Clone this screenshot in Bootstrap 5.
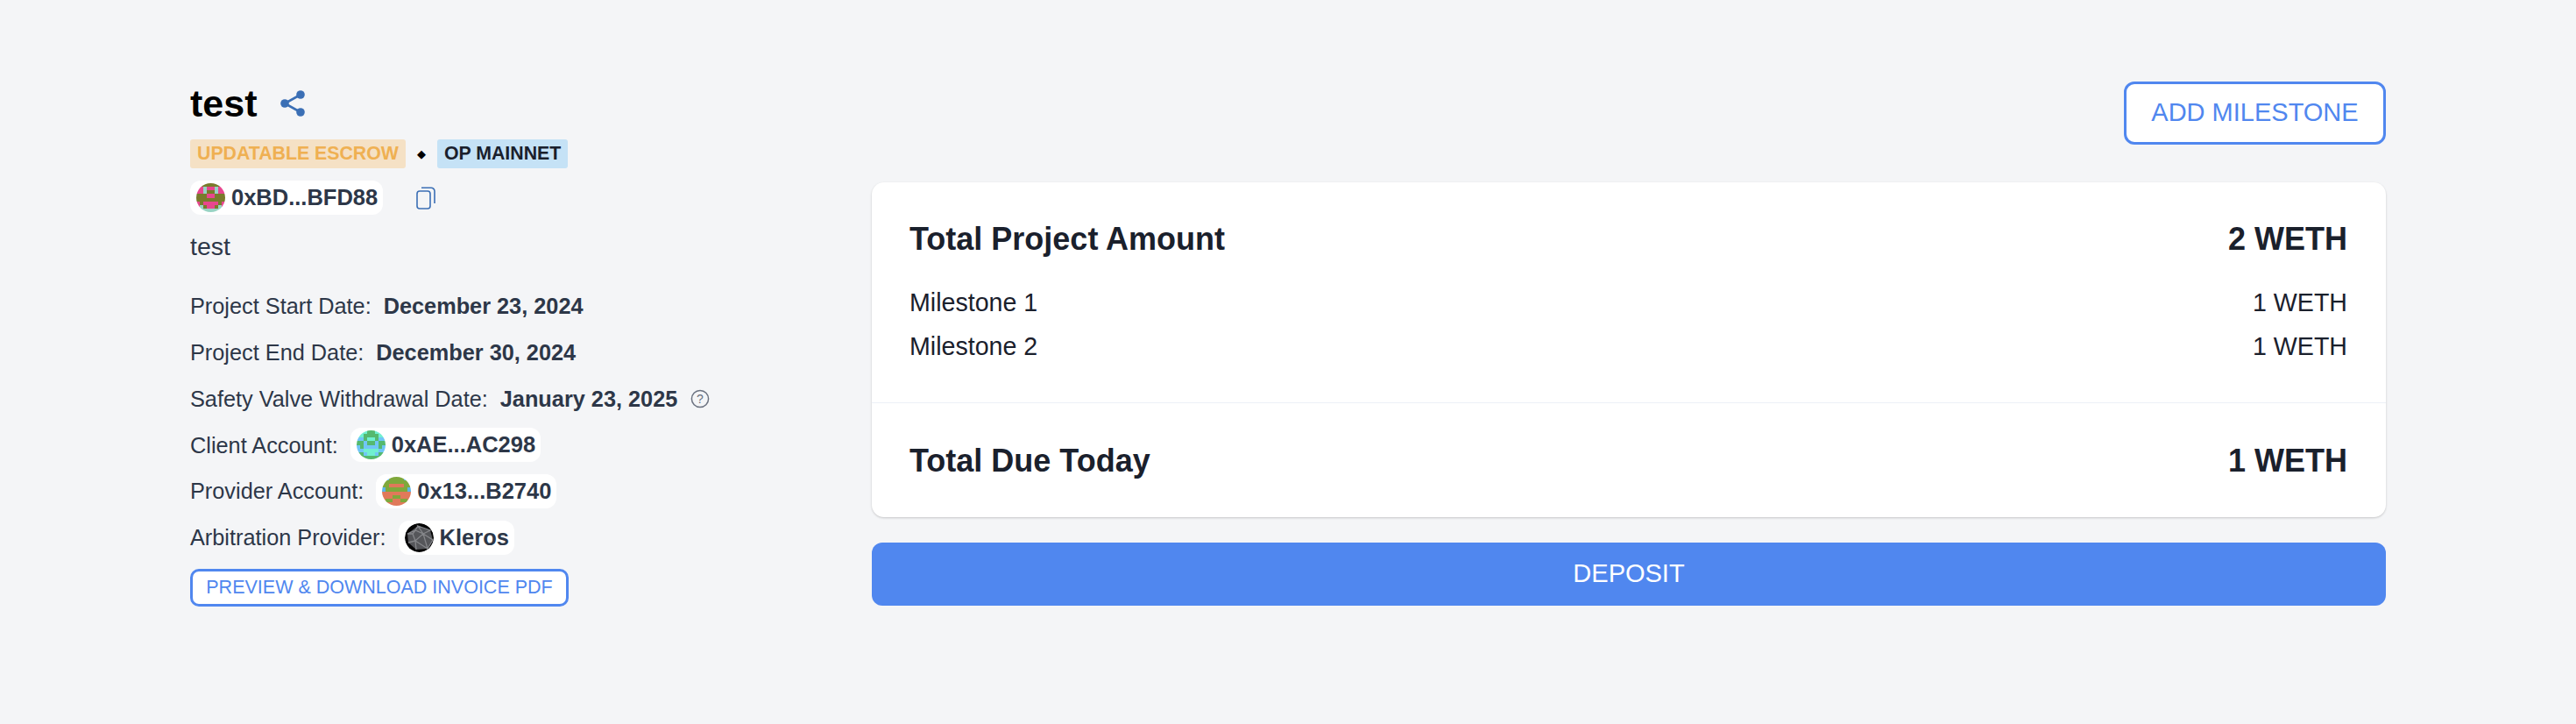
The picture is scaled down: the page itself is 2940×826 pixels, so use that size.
<!DOCTYPE html>
<html lang="en">
<head>
<meta charset="utf-8">
<title>test</title>
<link href="https://cdn.jsdelivr.net/npm/bootstrap@5.3.0/dist/css/bootstrap.min.css" rel="stylesheet">
<style>
html,body{height:100%}
body{background:#f4f5f7;font-family:"Liberation Sans",Arial,sans-serif;color:#2d3748;font-size:25.3px;line-height:1.2}
.page-wrap{padding:93px 217px 0}
.left-col{width:778px;flex:none}
.right-col{flex:1 1 auto;min-width:0}
.proj-title{font-size:43px;font-weight:700;color:#000;line-height:50px;margin:0}
.share-ico{margin-left:26px;width:30px;height:32px}
.tag-row{margin-top:16px;height:33px}
.tag-pill{font-size:21.3px;font-weight:700;line-height:33px;height:33px;padding:0 8px;border-radius:3px}
.tag-orange{background:#f5e1c5;color:#efb052}
.tag-blue{background:#c5e2f6;color:#1a202c}
.tag-sep{width:36px;text-align:center;font-size:13px;color:#000;font-family:"DejaVu Sans",sans-serif}
.addr-row{margin-top:14px}
.addr-chip{background:#fff;border-radius:12px;height:39px;padding:0 6px 0 7px;gap:7px;font-weight:700;color:#2d3748;font-size:25.5px}
.addr-ava{width:33px;height:33px;border-radius:50%;overflow:hidden;display:block;flex:none}
.copy-ico{margin-left:38px;width:22px;height:26px}
.desc-text{margin:18px 0 0;font-size:28.5px;line-height:36px;color:#2d3748}
.info-list{margin-top:24px}
.info-row{height:52.8px;gap:14px}
.info-row b{font-weight:700}
.help-ico{width:22px;height:22px;margin-left:1px}
.pdf-btn{display:block;width:432px;height:43px;border:3px solid #5087ef;background:#fff;color:#5087ef;border-radius:10px;font-size:21.5px;line-height:37px;padding:0;text-align:center;margin-top:9px}
.add-btn{width:299px;height:72px;border:3px solid #5087ef;background:#fff;color:#5087ef;border-radius:12px;font-size:29px;padding:0}
.add-btn:hover,.pdf-btn:hover{background:#fff;color:#5087ef;border-color:#5087ef}
.sum-card{margin-top:43px;background:#fff;border:0;border-radius:14px;box-shadow:0 1px 3px rgba(0,0,0,.12),0 1px 2px rgba(0,0,0,.08);color:#1a202c}
.sum-top{height:252px;padding:42px 44px 0 43px;border-bottom:1px solid #edf0f7}
.sum-big{font-size:36px;font-weight:700;line-height:46px}
.sum-line{font-size:28.6px;line-height:50px}
.sum-lines{margin-top:24px}
.sum-bot{height:130px;padding:2px 44px 0 43px}
.deposit-btn{display:block;width:100%;height:72px;margin-top:29px;background:#5087ef;border:0;border-radius:12px;color:#fff;font-size:29px;padding:0}
.deposit-btn:hover{background:#5087ef;color:#fff}
</style>
</head>
<body>
<div class="page-wrap d-flex">
  <div class="left-col">
    <div class="d-flex align-items-center">
      <h1 class="proj-title">test</h1>
      <svg class="share-ico" viewBox="0 0 30 32" aria-hidden="true"><path d="M24 6 6 16l18 10" fill="none" stroke="#3b6fb5" stroke-width="2.6"/><circle cx="24" cy="6" r="4.8" fill="#3b6fb5"/><circle cx="6" cy="16" r="4.8" fill="#3b6fb5"/><circle cx="24" cy="26" r="4.8" fill="#3b6fb5"/></svg>
    </div>
    <div class="tag-row d-flex align-items-center">
      <span class="tag-pill tag-orange">UPDATABLE ESCROW</span>
      <span class="tag-sep">◆</span>
      <span class="tag-pill tag-blue">OP MAINNET</span>
    </div>
    <div class="addr-row d-flex align-items-center">
      <span class="addr-chip d-inline-flex align-items-center">
        <svg class="addr-ava" viewBox="0 0 8 8" shape-rendering="crispEdges" data-grid="OOOOOOOO PPTPPTPP PPTOOTPP OOOPPOOO OOOOOOOO POPPPPOP PTOPPOTP PTTTTTTP" data-colors="P:#e8468f,O:#7a7a2c,T:#98d4c4"></svg>
        0xBD...BFD88
      </span>
      <svg class="copy-ico" viewBox="0 0 22 26" fill="none" stroke="#3b6fb5" stroke-width="1.6" aria-hidden="true"><rect x="1" y="5" width="15" height="20" rx="3"/><path d="M6 1.2h11a4 4 0 0 1 4 4V19"/></svg>
    </div>
    <p class="desc-text">test</p>
    <div class="info-list">
      <div class="info-row d-flex align-items-center">Project Start Date: <b>December 23, 2024</b></div>
      <div class="info-row d-flex align-items-center">Project End Date: <b>December 30, 2024</b></div>
      <div class="info-row d-flex align-items-center">Safety Valve Withdrawal Date: <b>January 23, 2025</b>
        <svg class="help-ico" viewBox="0 0 22 22" aria-hidden="true"><circle cx="11" cy="11" r="9.6" fill="none" stroke="#6b7280" stroke-width="1.5"/><text x="11" y="16" text-anchor="middle" font-size="14" fill="#6b7280" font-family="Liberation Sans">?</text></svg>
      </div>
      <div class="info-row d-flex align-items-center">Client Account:
        <span class="addr-chip d-inline-flex align-items-center">
          <svg class="addr-ava" viewBox="0 0 8 8" shape-rendering="crispEdges" data-grid="TTTGGTTT TTGGGGTT BBGTTGBB GGBGGBGG BGBBBBGB BBTTTTBB GGBTTBGG GGGGGGGG" data-colors="B:#70c6f6,G:#55b96f,T:#70f0d0"></svg>
          0xAE...AC298
        </span>
      </div>
      <div class="info-row d-flex align-items-center">Provider Account:
        <span class="addr-chip d-inline-flex align-items-center">
          <svg class="addr-ava" viewBox="0 0 8 8" shape-rendering="crispEdges" data-grid="BBGGGGBB GGGGGGGG GGOOOOGG BGGGGGGB OOOOOOOO OOOGGOOO OGGOOGGO OOOOOOOO" data-colors="O:#e0795a,G:#7fa83c,B:#5bb4e8"></svg>
          0x13...B2740
        </span>
      </div>
      <div class="info-row d-flex align-items-center">Arbitration Provider:
        <span class="addr-chip d-inline-flex align-items-center">
          <svg class="addr-ava" viewBox="0 0 33 33" aria-hidden="true"><circle cx="16.5" cy="16.5" r="16.5" fill="#050505"/><path d="M15 3 29 8l3 11-6 10-13 1L4 22 3 12z" fill="#55565a"/><path d="M15 3 12 8 3 12M15 3l14 5-8 4zM12 8l9 4-9 8-3-8zM21 12l11 7-6 10zM12 20l14 9M12 20l1 10M12 20l-8 2M9 12 3 12" fill="none" stroke="#85868a" stroke-width="1.3"/></svg>
          Kleros
        </span>
      </div>
    </div>
    <button type="button" class="btn pdf-btn">PREVIEW &amp; DOWNLOAD INVOICE PDF</button>
  </div>
  <div class="right-col">
    <div class="d-flex justify-content-end">
      <button type="button" class="btn add-btn">ADD MILESTONE</button>
    </div>
    <div class="card sum-card">
      <div class="sum-top">
        <div class="d-flex justify-content-between sum-big"><span>Total Project Amount</span><span>2 WETH</span></div>
        <div class="sum-lines">
          <div class="d-flex justify-content-between sum-line"><span>Milestone 1</span><span>1 WETH</span></div>
          <div class="d-flex justify-content-between sum-line"><span>Milestone 2</span><span>1 WETH</span></div>
        </div>
      </div>
      <div class="sum-bot d-flex justify-content-between align-items-center sum-big"><span>Total Due Today</span><span>1 WETH</span></div>
    </div>
    <button type="button" class="btn deposit-btn">DEPOSIT</button>
  </div>
</div>
<script>
document.querySelectorAll('svg[data-grid]').forEach(function(s){
  var c={};s.dataset.colors.split(',').forEach(function(p){var a=p.split(':');c[a[0]]=a[1];});
  var h='';s.dataset.grid.split(' ').forEach(function(r,y){r.split('').forEach(function(k,x){h+='<rect x="'+x+'" y="'+y+'" width="1" height="1" fill="'+c[k]+'"/>';});});
  s.innerHTML=h;
});
</script>
<script src="https://cdn.jsdelivr.net/npm/bootstrap@5.3.0/dist/js/bootstrap.bundle.min.js"></script>
</body>
</html>
